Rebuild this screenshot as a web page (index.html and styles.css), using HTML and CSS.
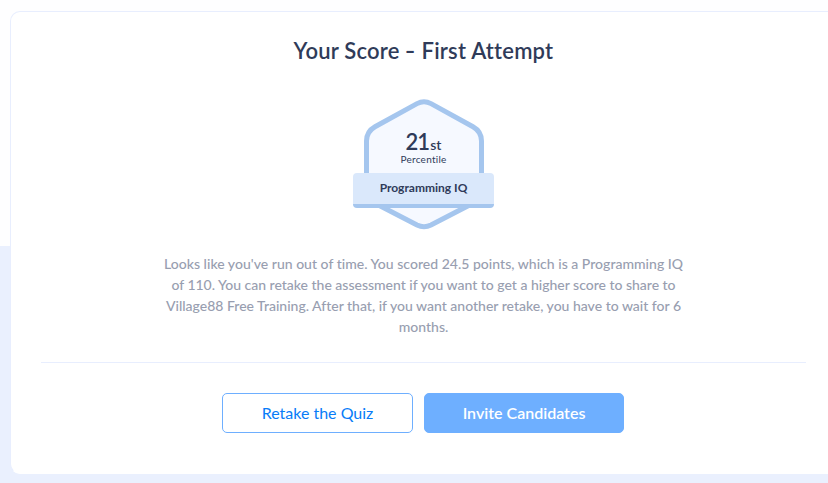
FILE: index.html
```html
<!DOCTYPE html>
<html lang="en">
<head>
<meta charset="utf-8">
<title>Your Score</title>
<link rel="stylesheet" href="styles.css">
</head>
<body>
<main class="card">
  <h1 class="title">Your Score <span class="dash">-</span> First Attempt</h1>
  <div class="badge">
    <svg class="hexagon" width="120" height="132" viewBox="0 0 120 132" aria-hidden="true">
      <path d="M53 4.6Q60 1 67 4.6L109 27.7Q117.5 32.5 117.5 42V90Q117.5 99.5 109 104.3L67 126Q60 129.4 53 126L11 104.3Q2.5 99.5 2.5 90V42Q2.5 32.5 11 27.7Z"/>
    </svg>
    <div class="score"><span class="value">21</span><span class="suffix">st</span></div>
    <div class="percentile">Percentile</div>
    <div class="ribbon"><span>Programming IQ</span></div>
  </div>
  <p class="message">
    <span class="line first">Looks like you've run out of time. You scored 24.5 points, which is a Programming IQ</span>
    <span class="line second">of 110. You can retake the assessment if you want to get a higher score to share to</span>
    <span class="line third">Village88 Free Training. After that, if you want another retake, you have to wait for 6</span>
    <span class="line fourth">months.</span>
  </p>
  <div class="actions">
    <button class="button outline"><span>Retake the Quiz</span></button>
    <button class="button solid"><span>Invite Candidates</span></button>
  </div>
</main>
</body>
</html>
```
FILE: styles.css
```css
* { box-sizing: border-box; }
body {
  margin: 0;
  height: 483px;
  padding: 11px 0 0 10px;
  overflow: hidden;
  background: linear-gradient(#fefeff 246px, #eaf0fe 246px);
  font-family: Lato, "Liberation Sans", sans-serif;
  font-variant-ligatures: none;
  color: #2f3b59;
}
.card {
  width: 827px;
  height: 463px;
  padding: 0 30px;
  border: 1px solid #e8eefe;
  border-bottom-color: #fff;
  border-radius: 10px;
  background: #fff;
}
.title {
  margin: 23px 0 0;
  font-size: 22px;
  line-height: 32px;
  font-weight: 600;
  letter-spacing: 0.22px;
  text-align: center;
  white-space: nowrap;
}
.dash { display: inline-block; transform: scaleX(1.3); margin: 0 1px; }
.badge {
  position: relative;
  width: 141px;
  height: 132px;
  margin: 32px auto 0;
  text-align: center;
}
.hexagon { position: absolute; left: 11px; top: 0; }
.hexagon path { fill: #f6f9ff; stroke: #a5c6ee; stroke-width: 5; }
.score { position: relative; padding-top: 30px; line-height: 26px; height: 54px; font-weight: 600; }
.value { font-size: 22px; letter-spacing: -1px; margin-right: 1px; }
.suffix { font-size: 14px; }
.percentile { position: relative; height: 20px; font-size: 10px; line-height: 12px; letter-spacing: 0.25px; }
.ribbon {
  position: relative;
  height: 35px;
  border-bottom: 4px solid #a5c6ee;
  border-radius: 4px;
  background: #dae8fb;
  font-size: 12px;
  line-height: 30px;
  font-weight: 700;
}
.message { margin: 22px 0 0; color: #989eb0; font-size: 14px; line-height: 21px; font-weight: 500; text-align: center; }
.line { display: block; white-space: nowrap; }
.first { letter-spacing: 0.02px; }
.second { letter-spacing: -0.01px; }
.actions {
  display: flex;
  justify-content: center;
  gap: 11px;
  margin-top: 25px;
  padding: 30px 2px 0 0;
  border-top: 1px solid #e8eefe;
}
.button {
  height: 40px;
  padding: 0 0 0 1px;
  border: 1px solid #6eafff;
  border-radius: 5px;
  font: 400 16px/38px Lato, "Liberation Sans", sans-serif;
}
.outline { width: 191px; background: #fff; color: #087cf8; }
.solid { width: 200px; background: #6eafff; color: #fff; font-weight: 600; }
```
